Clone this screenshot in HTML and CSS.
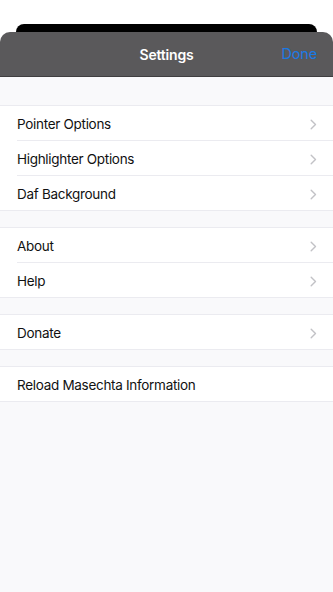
FILE: index.html
```html
<!DOCTYPE html>
<html>
<head>
<meta charset="utf-8">
<link rel="stylesheet" href="styles.css">
</head>
<body>
<div class="screen">
  <div class="backcard"></div>
  <div class="sheet">
    <header class="navbar">
      <span class="title">Settings</span>
      <span class="done">Done</span>
    </header>
    <div class="content">
      <section class="group">
        <div class="row"><span>Pointer Options</span><svg class="chev" viewBox="0 0 7 11"><path d="M1.2 1.2l4.3 4.3-4.3 4.3" /></svg></div>
        <div class="row"><span>Highlighter Options</span><svg class="chev" viewBox="0 0 7 11"><path d="M1.2 1.2l4.3 4.3-4.3 4.3" /></svg></div>
        <div class="row"><span>Daf Background</span><svg class="chev" viewBox="0 0 7 11"><path d="M1.2 1.2l4.3 4.3-4.3 4.3" /></svg></div>
      </section>
      <section class="group">
        <div class="row"><span>About</span><svg class="chev" viewBox="0 0 7 11"><path d="M1.2 1.2l4.3 4.3-4.3 4.3" /></svg></div>
        <div class="row"><span>Help</span><svg class="chev" viewBox="0 0 7 11"><path d="M1.2 1.2l4.3 4.3-4.3 4.3" /></svg></div>
      </section>
      <section class="group">
        <div class="row"><span>Donate</span><svg class="chev" viewBox="0 0 7 11"><path d="M1.2 1.2l4.3 4.3-4.3 4.3" /></svg></div>
      </section>
      <section class="group">
        <div class="row"><span>Reload Masechta Information</span></div>
      </section>
    </div>
  </div>
</div>
</body>
</html>
```
FILE: styles.css
```css
* { box-sizing: border-box; }
html, body {
  margin: 0;
  padding: 0;
  width: 333px;
  height: 592px;
  overflow: hidden;
  background: #ffffff;
  font-family: Inter, "Noto Sans", sans-serif;
}
.screen {
  width: 333px;
  height: 592px;
  padding-top: 24px;
  display: flex;
  flex-direction: column;
}
.backcard {
  height: 8px;
  margin: 0 16px;
  background: #000;
  border-radius: 8px 8px 0 0;
}
.sheet {
  flex: 1;
  display: flex;
  flex-direction: column;
  background: #f9f9fb;
  border-radius: 10px 10px 0 0;
  overflow: hidden;
}
.navbar {
  height: 45px;
  background: #5a595b;
  display: flex;
  align-items: center;
  justify-content: center;
  position: relative;
  border-bottom: 1px solid #3f3e40;
}
.title {
  color: #fff;
  font-size: 14px;
  font-weight: 600;
  letter-spacing: -0.2px;
}
.done {
  position: absolute;
  right: 16px;
  top: 13px;
  color: #1a79e6;
  font-size: 14.5px;
  letter-spacing: -0.2px;
}
.content {
  padding-top: 28px;
  display: flex;
  flex-direction: column;
  gap: 16px;
}
.group {
  background: #fff;
  border-top: 1px solid #ebebf0;
  border-bottom: 1px solid #ebebf0;
}
.row {
  height: 35px;
  margin-left: 17px;
  padding-right: 16px;
  padding-top: 2px;
  display: flex;
  align-items: center;
  justify-content: space-between;
  font-size: 13.5px;
  letter-spacing: -0.3px;
  color: #111;
  border-bottom: 1px solid #ebebf0;
}
.row:last-child { border-bottom: none; height: 34px; }
.chev {
  width: 7px;
  height: 11px;
  fill: none;
  stroke: #c2c2c6;
  stroke-width: 1.4;
  stroke-linecap: round;
  stroke-linejoin: round;
}
```
